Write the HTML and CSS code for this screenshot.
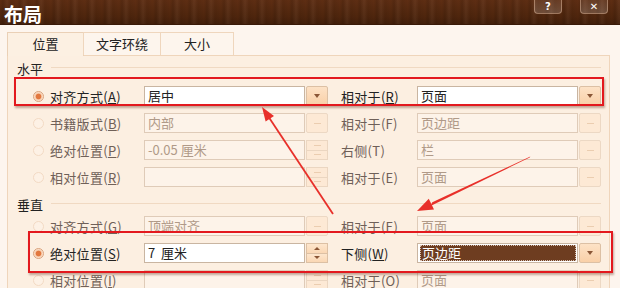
FILE: index.html
```html
<!DOCTYPE html>
<html lang="zh">
<head>
<meta charset="utf-8">
<title>布局</title>
<link rel="stylesheet" href="styles.css">
</head>
<body>
<div class="titlebar">
  <div class="title">布局</div>
  <div class="tbtns">
    <div class="tbtn">?</div>
    <div class="tbtn">✕</div>
  </div>
</div>
<div class="tabs">
  <div class="tab active">位置</div>
  <div class="tab t2">文字环绕</div>
  <div class="tab t3">大小</div>
</div>
<div class="panel">
  <div class="ghead">水平</div>
  <div class="rows first">
    <div class="row">
      <span class="radio sel"></span><span class="lbl">对齐方式(<u>A</u>)</span>
      <div class="field"><div class="inp">居中</div><div class="btn"><i class="dn"></i></div></div>
      <span class="lbl2">相对于(<u>R</u>)</span>
      <div class="field"><div class="inp">页面</div><div class="btn"><i class="dn"></i></div></div>
    </div>
    <div class="row dis">
      <span class="radio"></span><span class="lbl">书籍版式(<u>B</u>)</span>
      <div class="field"><div class="inp">内部</div><div class="btn"><i class="dash"></i></div></div>
      <span class="lbl2">相对于(F)</span>
      <div class="field"><div class="inp">页边距</div><div class="btn"><i class="dash"></i></div></div>
    </div>
    <div class="row dis">
      <span class="radio"></span><span class="lbl">绝对位置(<u>P</u>)</span>
      <div class="field"><div class="inp">-0.05&nbsp;厘米</div><div class="spin"><b><i class="dash"></i></b><b><i class="dash"></i></b></div></div>
      <span class="lbl2">右侧(T)</span>
      <div class="field"><div class="inp">栏</div><div class="btn"><i class="dash"></i></div></div>
    </div>
    <div class="row dis">
      <span class="radio"></span><span class="lbl">相对位置(<u>R</u>)</span>
      <div class="field"><div class="inp"></div><div class="spin"><b><i class="dash"></i></b><b><i class="dash"></i></b></div></div>
      <span class="lbl2">相对于(E)</span>
      <div class="field"><div class="inp">页面</div><div class="btn"><i class="dash"></i></div></div>
    </div>
  </div>
  <div class="ghead g2">垂直</div>
  <div class="rows second">
    <div class="row dis">
      <span class="radio"></span><span class="lbl">对齐方式(<u>G</u>)</span>
      <div class="field"><div class="inp">顶端对齐</div><div class="btn"><i class="dash"></i></div></div>
      <span class="lbl2">相对于(E)</span>
      <div class="field"><div class="inp">页面</div><div class="btn"><i class="dash"></i></div></div>
    </div>
    <div class="row">
      <span class="radio sel"></span><span class="lbl">绝对位置(<u>S</u>)</span>
      <div class="field"><div class="inp">7&nbsp;&nbsp;厘米</div><div class="spin"><b><i class="up"></i></b><b><i class="dn"></i></b></div></div>
      <span class="lbl2 strong">下侧(<u>W</u>)</span>
      <div class="field"><div class="inp"><span class="hl">页边距</span></div><div class="btn"><i class="dn"></i></div></div>
    </div>
    <div class="row dis">
      <span class="radio"></span><span class="lbl">相对位置(<u>I</u>)</span>
      <div class="field"><div class="inp"></div><div class="spin"><b><i class="dash"></i></b><b><i class="dash"></i></b></div></div>
      <span class="lbl2">相对于(O)</span>
      <div class="field"><div class="inp">页面</div><div class="btn"><i class="dash"></i></div></div>
    </div>
  </div>
</div>

<div class="mark m1"></div>
<div class="mark m2"></div>
<svg class="arrows" width="620" height="288" viewBox="0 0 620 288">
  <line x1="333" y1="214" x2="268" y2="116" stroke="#e8302a" stroke-width="1.8"/>
  <polygon points="262,107 274,116 265.6,121.5" fill="#e8302a"/>
  <polygon points="530.3,156.5 529.7,157.5 430.5,206 432.3,202.3" fill="#e8302a"/>
  <polygon points="417,211 434,209.5 428.8,198.7" fill="#e8302a"/>
</svg>
</body>
</html>
```

FILE: styles.css
```css
* { box-sizing: border-box; }
html, body { margin: 0; padding: 0; }
body {
  width: 620px;
  height: 288px;
  overflow: hidden;
  position: relative;
  background: #fdf5ee;
  font-family: "Noto Sans CJK SC", "Noto Sans", sans-serif;
  font-size: 13px;
  color: #222;
}
u { text-decoration: underline; text-underline-offset: 1px; }

.titlebar {
  height: 25px;
  display: flex;
  align-items: flex-start;
  background:
    repeating-linear-gradient(90deg, rgba(0,0,0,0) 0px, rgba(0,0,0,0.10) 3px, rgba(255,255,255,0.04) 7px, rgba(0,0,0,0.06) 11px, rgba(0,0,0,0) 17px),
    linear-gradient(#5e2e13, #4e250d 70%, #43200b);
  border-bottom: 1px solid #3a1a08;
}
.title {
  color: #fff;
  font-size: 19px;
  font-weight: bold;
  line-height: 23px;
  padding-top: 2px;
  padding-left: 4px;
}
.tbtns { margin-left: auto; margin-right: 12px; display: flex; gap: 18px; }
.tbtn {
  width: 28px;
  height: 14px;
  border: 1px solid rgba(240,200,170,0.45);
  border-top: none;
  border-radius: 0 0 4px 4px;
  background: linear-gradient(rgba(255,255,255,0.08), rgba(255,255,255,0.18));
  color: #fff;
  font-family: "DejaVu Sans", sans-serif;
  font-weight: bold;
  font-size: 10px;
  line-height: 13px;
  text-align: center;
}

.tabs {
  display: flex;
  margin: 7px 0 0 7px;
  height: 23px;
  position: relative;
  z-index: 1;
}
.tab {
  height: 23px;
  border: 1px solid #efd6bd;
  border-bottom: none;
  background: #fdf5ed;
  text-align: center;
  line-height: 22px;
  width: 78px;
  margin-left: -1px;
}
.tab.active {
  width: 77px;
  margin-left: 0;
  height: 24px;
  background: #fcf0e2;
  border-color: #ead0b6;
}
.tab.t3 { width: 74px; }

.panel {
  margin-left: 7px;
  width: 603px;
  height: 233px;
  overflow: hidden;
  background: #fcefe1;
  border: 1px solid #efd5bb;
  border-bottom: none;
  padding-top: 5px;
}
.ghead {
  display: flex;
  align-items: center;
  line-height: 16px;
  height: 16px;
  padding-left: 9px;
  gap: 8px;
  padding-right: 8px;
}
.ghead::after {
  content: "";
  flex: 1;
  height: 1px;
  background: #f0d9c2;
  margin-top: -4px;
}
.g2 { margin-top: 10px; }
.rows { display: flex; flex-direction: column; gap: 7px; padding-left: 25px; }
.rows.first { margin-top: 9px; }
.rows.second { margin-top: 3px; }

.row { display: flex; align-items: center; height: 20px; flex: none; }
.radio {
  width: 11px;
  height: 11px;
  border-radius: 50%;
  border: 1px solid #f0cfb0;
  background: radial-gradient(circle at 45% 40%, #fffaf4, #fbe3cc);
  margin-right: 6px;
  flex: none;
}
.radio.sel {
  border-color: #d9a27c;
  background: radial-gradient(circle, #e2783f 0 2.4px, #f7c8a6 3.2px, #fff0e2 5px);
}
.lbl { width: 94px; white-space: nowrap; letter-spacing: 0.3px; }
.lbl2 { width: 76px; margin-left: 13px; white-space: nowrap; letter-spacing: 0.3px; }
.dis .lbl, .dis .lbl2 { color: #6f6058; }
.dis .radio { border-color: #f3dac4; background: #fdf1e5; }

.field { width: 184px; height: 20px; display: flex; }
.inp {
  flex: 1;
  height: 20px;
  border: 1px solid #c9b5a1;
  background: #fff;
  padding-left: 3px;
  line-height: 18px;
  white-space: nowrap;
  overflow: hidden;
}
.dis .inp {
  background: #fdf3e9;
  border-color: #dfcbb8;
  color: #b09a88;
}
.btn {
  width: 22px;
  margin-left: 1px;
  height: 20px;
  border: 1px solid #dcc0a4;
  border-radius: 2px;
  background: linear-gradient(#fde2c6, #f9d0a8);
  display: flex;
  align-items: center;
  justify-content: center;
}
.dis .btn { background: #fde9d5; border-color: #ecd8c4; }
.spin {
  width: 22px;
  margin-left: 1px;
  height: 20px;
  display: flex;
  flex-direction: column;
}
.spin b {
  flex: 1;
  border: 1px solid #dcc0a4;
  background: linear-gradient(#fde6cd, #fad7b4);
  display: flex;
  align-items: center;
  justify-content: center;
}
.spin b + b { border-top: none; }
.dis .spin b { background: #fde9d5; border-color: #ebd6c1; }
i { display: block; }
i.dn {
  width: 0; height: 0;
  border-left: 3.5px solid transparent;
  border-right: 3.5px solid transparent;
  border-top: 4px solid #8a5636;
}
i.up {
  width: 0; height: 0;
  border-left: 3px solid transparent;
  border-right: 3px solid transparent;
  border-bottom: 3px solid #8a5636;
}
.spin i.dn { border-left-width: 3px; border-right-width: 3px; border-top-width: 3px; }
i.dash { width: 7px; height: 1px; background: #ebcdb0; }
.hl {
  display: block;
  margin: 1px 1px 0 -1px;
  height: 16px;
  line-height: 15px;
  padding-left: 2px;
  background: #6e3d20;
  color: #fff;
  outline: 1px dotted #d8c0b0;
  outline-offset: -1px;
}

.mark {
  position: absolute;
  border: 2px solid #e3191e;
  box-shadow: 1px 2px 2px rgba(90,30,10,0.35);
}
.m1 { left: 14px; top: 77px; width: 590px; height: 29px; }
.m2 { left: 28px; top: 231px; width: 585px; height: 42px; }
.arrows { position: absolute; left: 0; top: 0; pointer-events: none; }
```
